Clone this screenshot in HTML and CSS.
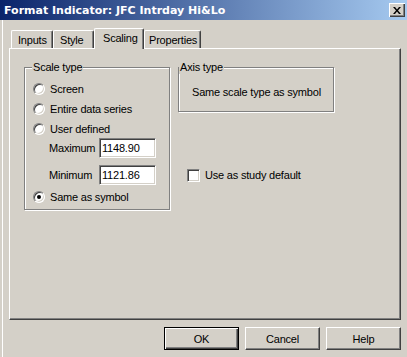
FILE: index.html
```html
<!doctype html>
<html>
<head>
	<title>Format Indicator</title>
	<link rel="stylesheet" href="styles.css">
</head>
<body>
	<div class="window">
		<div class="titlebar">
			<span class="title">Format Indicator: JFC Intrday Hi&amp;Lo</span>
			<span class="close">
				<svg width="8" height="7" viewBox="0 0 8 7"><path d="M0 0h2l2 2.5 2-2.5h2l-3 3.5 3 3.5h-2l-2-2.5-2 2.5h-2l3-3.5z" fill="#000"/></svg>
			</span>
		</div>
		<div class="client">
			<div class="tabs">
				<span class="tab tab-inputs">Inputs</span>
				<span class="tab tab-style">Style</span>
				<span class="tab tab-scaling active">Scaling</span>
				<span class="tab tab-props">Properties</span>
			</div>
			<div class="panel">
				<div class="col-left">
					<fieldset class="group scale">
						<legend>Scale type</legend>
						<label class="row"><i class="radio"></i>Screen</label>
						<label class="row"><i class="radio"></i>Entire data series</label>
						<label class="row"><i class="radio"></i>User defined</label>
						<div class="field">
							<span class="field-name">Maximum</span>
							<input type="text" value="1148.90" readonly>
						</div>
						<div class="field field-min">
							<span class="field-name">Minimum</span>
							<input type="text" value="1121.86" readonly>
						</div>
						<label class="row row-last"><i class="radio checked"></i>Same as symbol</label>
					</fieldset>
				</div>
				<div class="col-right">
					<fieldset class="group axis">
						<legend>Axis type</legend>
						<div class="axis-text">Same scale type as symbol</div>
					</fieldset>
					<label class="check-row"><i class="check"></i>Use as study default</label>
				</div>
			</div>
			<div class="buttons">
				<span class="btn default">OK</span>
				<span class="btn">Cancel</span>
				<span class="btn">Help</span>
			</div>
		</div>
	</div>
</body>
</html>
```

FILE: styles.css
```css
*{
	margin:0;
	padding:0;
	box-sizing:border-box;
}
body{
	background:#d4d0c8;
}
.window{
	width:407px;
	height:357px;
	background:#d4d0c8;
	font-family:"Liberation Sans", Arial, sans-serif;
	font-size:11px;
	letter-spacing:-0.2px;
	color:#000;
	overflow:hidden;
}
.titlebar{
	height:20px;
	display:flex;
	align-items:center;
	justify-content:space-between;
	padding:0 2px 0 4px;
	background:linear-gradient(to right, #0a246a, #a6caf0);
}
.title{
	color:#fff;
	font-weight:bold;
	font-family:"DejaVu Sans", sans-serif;
	font-size:11px;
	letter-spacing:0;
}
.close{
	width:16px;
	height:14px;
	display:flex;
	align-items:center;
	justify-content:center;
	background:#d4d0c8;
	box-shadow:inset 1px 1px #fff, inset -1px -1px #404040, inset -2px -2px #808080;
}
.client{
	height:337px;
	padding:8px 0 0 7px;
	border-left:2px solid #d4d0c8;
	box-shadow:inset 3px 0 0 -2px #fff;
}

/* tabs */
.tabs{
	display:flex;
	align-items:flex-end;
	height:21px;
	padding-left:2px;
	position:relative;
	z-index:1;
	margin-bottom:-1px;
}
.tab{
	height:18px;
	margin-bottom:1px;
	display:flex;
	align-items:center;
	padding-left:6px;
	border-top:1px solid #fff;
	border-left:1px solid #fff;
	border-right:1px solid #404040;
	box-shadow:inset -1px 0 #808080;
	border-radius:2px 2px 0 0;
	background:#d4d0c8;
}
.tab-inputs{ width:42px; }
.tab-style{ width:41px; }
.tab-scaling{ width:50px; padding-left:8px; }
.tab-props{ width:57px; padding-left:4px; }
.tab.active{
	height:21px;
	margin-bottom:0;
	padding-bottom:3px;
}

.panel{
	width:392px;
	height:272px;
	border:1px solid;
	border-color:#fff #404040 #404040 #fff;
	box-shadow:inset -1px -1px #808080;
	display:flex;
	padding:12px 0 0 14px;
	gap:8px;
}

/* group boxes */
.group{
	border:1px solid #808080;
	box-shadow:inset 1px 1px #fff, 1px 1px #fff;
	min-width:0;
}
.group legend{
	padding:0 1px;
	background:#d4d0c8;
	line-height:13px;
}
.scale{
	width:146px;
	padding:5px 0 2px 0;
}
.scale legend{
	margin-left:7px;
}
.row{
	display:flex;
	align-items:center;
	height:20px;
	padding-left:8px;
}
.row-last{
	margin-top:2px;
}
.radio{
	width:12px;
	height:12px;
	margin-right:5px;
	border-radius:50%;
	border:1px solid;
	border-color:#808080 #fff #fff #808080;
	box-shadow:inset 1px 1px #404040, inset -1px -1px #d4d0c8;
	background:#fff;
	display:flex;
	align-items:center;
	justify-content:center;
}
.radio.checked:after{
	content:"";
	width:4px;
	height:4px;
	border-radius:50%;
	background:#000;
}
.field{
	display:flex;
	align-items:center;
	padding-left:24px;
	height:20px;
	margin-top:-1px;
}
.field-min{
	margin-top:7px;
}
.field-name{
	width:50px;
}
.field input{
	width:57px;
	height:20px;
	border:1px solid;
	border-color:#808080 #fff #fff #808080;
	box-shadow:inset 1px 1px #404040, inset -1px -1px #d4d0c8;
	background:#fff;
	font-family:"Liberation Sans", Arial, sans-serif;
	font-size:11px;
	letter-spacing:-0.2px;
	padding-left:2px;
	outline:none;
}

.col-right{
	display:flex;
	flex-direction:column;
}
.axis{
	width:156px;
	height:51px;
	padding:12px 0 0 0;
}
.axis-text{
	padding-left:13px;
}
.check-row{
	display:flex;
	align-items:center;
	margin:56px 0 0 9px;
	height:14px;
}
.check{
	width:13px;
	height:13px;
	margin-right:5px;
	border:1px solid;
	border-color:#808080 #fff #fff #808080;
	box-shadow:inset 1px 1px #404040, inset -1px -1px #d4d0c8;
	background:#fff;
}

/* bottom buttons */
.buttons{
	width:392px;
	display:flex;
	justify-content:flex-end;
	gap:6px;
	margin-top:7px;
}
.btn{
	width:75px;
	height:23px;
	display:flex;
	align-items:center;
	justify-content:center;
	border:1px solid;
	border-color:#fff #404040 #404040 #fff;
	box-shadow:inset -1px -1px #808080;
}
.btn.default{
	border-color:#000;
	box-shadow:inset 1px 1px #fff, inset -1px -1px #404040, inset -2px -2px #808080;
}
```
